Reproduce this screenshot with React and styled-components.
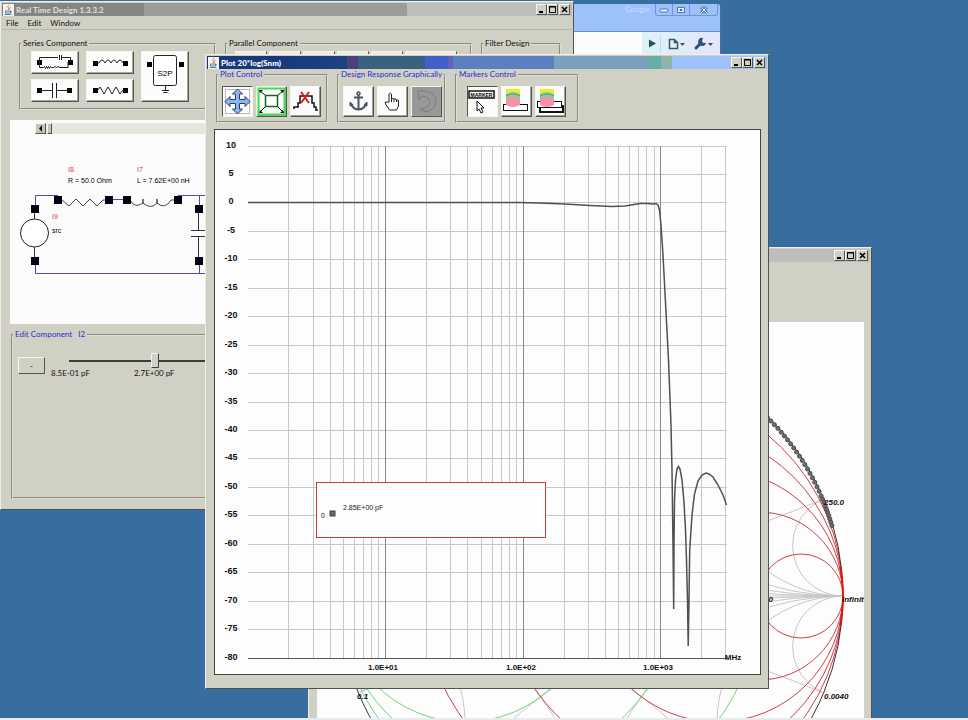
//App.jsx
import React, {useState} from 'react';
import styled, {createGlobalStyle, css} from 'styled-components';

const GlobalStyle = createGlobalStyle`
    * {
        box-sizing: border-box;
    }
    body {
        margin: 0;
        background-color: #386e9f;
        font-family: Lato, "DejaVu Sans Condensed", sans-serif;
        font-size: 8px;
        line-height: 10px;
        color: #111;
    }
    button, input {
        font: inherit;
        color: inherit;
    }
    svg {
        display: block;
    }
`;
//style for the whole desktop behind the windows
const Desktop = styled.main`
    position: relative;
    height: 100vh;
    overflow: hidden;
    background-color: #386e9f;
`;
//thin top edge of the hidden task bar
const TaskBar = styled.footer`
    position: absolute;
    left: 0;
    right: 0;
    bottom: 0;
    height: 2px;
    background-color: #e6ecec;
`;
//style for a classic window, placed on the desktop
const Frame = styled.section`
    position: absolute;
    left: ${(props) => props.$x}px;
    top: ${(props) => props.$y}px;
    width: ${(props) => props.$width}px;
    padding: 1px;
    display: flex;
    flex-direction: column;
    background-color: #d0d0c5;
    border: 1px solid #eeeee6;
    border-right-color: #4c5358;
    border-bottom-color: #4c5358;
`;
const TitleBar = styled.header`
    display: flex;
    align-items: center;
    justify-content: flex-end;
    gap: 2px;
    height: 13px;
    padding: 0 2px 0 1px;
    color: ${(props) => (props.$active ? '#fff' : '#dcdcd8')};
    background: ${(props) => props.$fill};
`;
const Title = styled.h1`
    flex: 1;
    margin: 0;
    font-size: 8px;
    line-height: 12px;
    font-weight: 900;
    white-space: nowrap;
`;
const raised = css`
    border: 1px solid #f6f6f0;
    border-right-color: #55554f;
    border-bottom-color: #55554f;
`;
const CaptionButton = styled.button`
    ${raised}
    width: 11px;
    height: 11px;
    padding: 0;
    display: grid;
    place-items: center;
    background-color: #d0d0c5;
    &:last-child {
        margin-left: 1px;
    }
`;
const CaptionButtons = styled.div`
    display: flex;
`;
const MenuBar = styled.nav`
    display: flex;
    gap: 9px;
    height: 14px;
    padding: 0 4px;
    align-items: center;
    border-bottom: 1px solid #b4b4aa;
`;
const MenuItem = styled.button`
    padding: 0;
    border: 0;
    background: none;
`;
//etched box with a caption
const Group = styled.fieldset`
    min-width: 0;
    margin: 0;
    padding: 0;
    border: 2px groove #dfdfd6;
    flex: ${(props) => (props.$width ? `0 0 ${props.$width}px` : '0 0 auto')};
`;
const Caption = styled.legend`
    padding: 0 2px;
    font-size: 8px;
    line-height: 9px;
    white-space: pre;
    color: ${(props) => (props.$blue ? '#2d2dd2' : '#111')};
`;
const GroupRow = styled.div`
    display: flex;
    align-items: stretch;
    gap: ${(props) => props.$gap}px;
    padding: ${(props) => props.$pad};
`;
const PartGrid = styled.div`
    display: grid;
    grid-template-columns: repeat(3, 48px);
    grid-template-rows: 23px 23px;
    gap: 5px 7px;
    padding: 3px 10px 6px;
`;
const PartButton = styled.button`
    ${raised}
    padding: 0;
    background-color: #fcfcfa;
    box-shadow: inset -1px -1px #a8a8a0;
    grid-row: ${(props) => (props.$tall ? '1 / span 2' : 'auto')};
    grid-column: ${(props) => (props.$tall ? 3 : 'auto')};
`;
const StubRow = styled.div`
    display: flex;
    gap: 2px;
    padding: 3px 8px 6px;
`;
const StubButton = styled.button`
    ${raised}
    width: ${(props) => props.$width || 32}px;
    height: 23px;
    padding: 0;
    background-color: #ecece4;
`;
const Schematic = styled.div`
    margin: 10px 7px 0 8px;
    background-color: #fcfcfc;
    padding-top: 3px;
`;
const ScrollTrack = styled.div`
    display: flex;
    gap: 1px;
    height: 11px;
    margin-left: 25px;
    background-color: #e6e6df;
`;
const ScrollButton = styled.button`
    ${raised}
    width: ${(props) => (props.$thumb ? 5 : 11)}px;
    padding: 0;
    display: grid;
    place-items: center;
    background-color: #c4c4bb;
`;
const EditRow = styled.div`
    display: flex;
    align-items: flex-start;
    gap: 6px;
    height: 158px;
    padding: 14px 5px 0;
`;
const StepButton = styled.button`
    ${raised}
    width: 27px;
    height: 17px;
    margin-top: 4px;
    padding: 0;
    background-color: #d0d0c5;
`;
const SliderBox = styled.div`
    display: flex;
    flex-direction: column;
`;
const Slider = styled.input`
    appearance: none;
    width: 172px;
    height: 15px;
    margin: 0 0 0 18px;
    background: linear-gradient(#3c3c38, #3c3c38) center / 100% 2px no-repeat;
    &::-webkit-slider-thumb {
        appearance: none;
        width: 8px;
        height: 15px;
        background-color: #d0d0c5;
        border: 1px solid #f6f6f0;
        border-right-color: #44443f;
        border-bottom-color: #44443f;
    }
`;
const SliderLabels = styled.div`
    display: flex;
    gap: 44px;
`;
const ToolRow = styled.div`
    display: flex;
    gap: 3px;
    padding: 7px ${(props) => props.$inset || 4}px 4px;
`;
const ToolButton = styled.button`
    width: 31px;
    height: 31px;
    padding: 0;
    border: 1px solid;
    border-color: ${(props) => (props.$pressed ? '#55554f #f6f6f0 #f6f6f0 #55554f' : '#f6f6f0 #55554f #55554f #f6f6f0')};
    box-shadow: ${(props) => (props.$pressed ? 'none' : 'inset -1px -1px #a0a098')};
    background-color: ${(props) => (props.disabled ? '#989898' : '#fcfcfc')};
`;
const PlotArea = styled.div`
    margin: 6px 6px 12px 7px;
    border: 1px solid #44443f;
    background-color: #fdfdfd;
    svg {
        width: 100%;
        height: auto;
    }
`;
const SmithArea = styled.div`
    margin: 60px 6px 0 7px;
    background-color: #fdfdfd;
    svg {
        width: 100%;
        height: auto;
    }
`;
//style for the browser window in the back
const Browser = styled.section`
    position: absolute;
    left: 420px;
    top: 4px;
    width: 301px;
    border-right: 1px solid #4d6f96;
    border-radius: 0 3px 0 0;
    background-color: #9dc1fb;
`;
const BrowserTop = styled.header`
    display: flex;
    justify-content: flex-end;
    height: 28px;
    padding-right: 2px;
    color: #c9dcfa;
    gap: 5px;
    border-bottom: 1px solid #7391b8;
`;
const BrowserButtons = styled.div`
    display: flex;
    height: 12px;
    border: 1px solid #6f94cf;
    border-top: 0;
    border-radius: 0 0 3px 3px;
`;
const BrowserButton = styled.button`
    width: ${(props) => props.$width}px;
    padding: 0;
    display: grid;
    place-items: center;
    border: 0;
    background: none;
    & + & {
        border-left: 1px solid #6f94cf;
    }
`;
const BrowserTools = styled.div`
    display: flex;
    justify-content: flex-end;
    height: 60px;
    background: linear-gradient(90deg, #fbfcfd 74%, #def3f5 74%, #e2e6fa);
`;
const BrowserTool = styled.button`
    width: ${(props) => props.$width}px;
    height: 23px;
    padding: 0;
    border: 0;
    background: none;
`;

const inactiveFill = 'linear-gradient(90deg, #858583 25%, #9c9c99 25% 71%, #bdbdbb 71%)';
const activeFill = `linear-gradient(90deg, #17397c 0 12%, #1d427f 25%, #4a427c 25% 27%,
    #3b6180 27% 39%, #4160c8 39% 43%, #6362bf 43% 44%, #5b80c1 44% 62%,
    #7aa0bd 62% 79%, #60b2a8 79% 81%, #8fb5aa 81% 83%, #9fc1fb 83%)`;

const JavaIcon = () => (
    <svg width="11" height="12" viewBox="0 0 11 12">
        <rect width="11" height="12" fill="#f2f4f4" />
        <path d="M6 1C3 3 7 4 5 6M7.500 3C5.500 4.500 7 5 6 6" stroke="#e07a30" fill="none" />
        <path d="M2.500 7h5v2h-5zM7.500 7q2 0 0 2M1.500 10.500h7" stroke="#537ca6" fill="none" />
    </svg>
);

function Caps(){
    return (
        <CaptionButtons>
            <CaptionButton aria-label="Minimize">
                <svg width="9" height="9"><path d="M2 7h4" stroke="#000" strokeWidth="2" /></svg>
            </CaptionButton>
            <CaptionButton aria-label="Maximize">
                <svg width="9" height="9"><path d="M1.500 1.500h6v6h-6zM1 2h7" stroke="#000" fill="none" /></svg>
            </CaptionButton>
            <CaptionButton aria-label="Close">
                <svg width="9" height="9"><path d="M2 2l5 5M7 2l-5 5" stroke="#000" strokeWidth="1.500" /></svg>
            </CaptionButton>
        </CaptionButtons>
    );
}

//the two square pins of a series part
const Pins = ({y, left = 8, right = 38}) => (
    <g>
        <rect x={left - 2} y={y - 2} width="5" height="5" />
        <rect x={right - 2} y={y - 2} width="5" height="5" />
    </g>
);
const partIcons = {
    tank: (
        <svg width="46" height="21">
            <Pins y={10} left={7} right={38} />
            <path d="M7.500 10V5.500H26M30 5.500h8.500V10M27.500 3v5M29.500 3v5M7.500 10v5.500h4l1-1 1 2 1-2 1 2 1-2 1 2 1-2 1 1h2q1.500-2 3 0 1.500-2 3 0h8.500V10" stroke="#222" fill="none" />
        </svg>
    ),
    coil: (
        <svg width="46" height="21">
            <Pins y={11} />
            <path d="M8 11h4q3-6 6 0 3-6 6 0 3-6 6 0 3-6 6 0" stroke="#222" fill="none" />
        </svg>
    ),
    cap: (
        <svg width="46" height="21">
            <Pins y={10} left={7} right={37} />
            <path d="M7 10.500h13M24 10.500h13M20.500 3v15M24.500 3v15" stroke="#222" fill="none" />
        </svg>
    ),
    resistor: (
        <svg width="46" height="21">
            <Pins y={10} />
            <path d="M8 10h3l2-3 4 7 4-7 4 7 4-7 4 7 3-4" stroke="#222" fill="none" />
        </svg>
    ),
};

function MainWindow(){
    const [value, setValue] = useState(50);
    return (
        <Frame $x={0} $y={1} $width={574}>
            <TitleBar $fill={inactiveFill}>
                <JavaIcon />
                <Title>Real Time Design 1.3.3.2</Title>
                <Caps />
            </TitleBar>
            <MenuBar>
                <MenuItem>File</MenuItem>
                <MenuItem>Edit</MenuItem>
                <MenuItem>Window</MenuItem>
            </MenuBar>
            <GroupRow $gap={9} $pad="9px 8px 0 17px">
                <Group $width={197}>
                    <Caption>Series Component</Caption>
                    <PartGrid>
                        <PartButton aria-label="Tank">{partIcons.tank}</PartButton>
                        <PartButton aria-label="Inductor">{partIcons.coil}</PartButton>
                        <PartButton $tall aria-label="S2P block">
                            <svg width="46" height="49">
                                <Pins y={12} left={7} right={39} />
                                <rect x="11.500" y="3.500" width="23" height="30" rx="2" fill="#fff" stroke="#222" />
                                <path d="M23.500 34v4M20 38.500h7M21.500 40.500h4" stroke="#222" />
                                <text x="23" y="24" textAnchor="middle" fontSize="8" fontFamily="Liberation Sans, sans-serif">S2P</text>
                            </svg>
                        </PartButton>
                        <PartButton aria-label="Capacitor">{partIcons.cap}</PartButton>
                        <PartButton aria-label="Resistor">{partIcons.resistor}</PartButton>
                    </PartGrid>
                </Group>
                <Group $width={247}>
                    <Caption>Parallel Component</Caption>
                    <StubRow>
                        <StubButton aria-label="Parallel tank" />
                        <StubButton aria-label="Parallel inductor" />
                        <StubButton aria-label="Parallel capacitor" />
                        <StubButton aria-label="Parallel resistor" />
                        <StubButton aria-label="Parallel line" />
                        <StubButton $width={52} aria-label="Parallel stub" />
                    </StubRow>
                </Group>
                <Group $width={80}>
                    <Caption>Filter Design</Caption>
                </Group>
            </GroupRow>
            <Schematic>
                <ScrollTrack>
                    <ScrollButton aria-label="Scroll left">
                        <svg width="5" height="7"><path d="M4 0v7L1 3.500z" fill="#111" /></svg>
                    </ScrollButton>
                    <ScrollButton $thumb aria-label="Scroll thumb" />
                </ScrollTrack>
                <svg width="220" height="190" viewBox="10 134 220 190" fontFamily="Liberation Sans, sans-serif" fontSize="7">
                    <path d="M35.500 209V195.500H58M109 199.500h18M178 195.500h50M35.500 261v12.500H228M199.500 195v14M199.500 261v12" stroke="#4a4abf" fill="none" />
                    <path d="M62 200l7 6 7-7 7 7 7-7 7 7 6-6h6M130 200q5 9 13 3v-4 4q8 7 14 0v-4 4q8 7 14-3h7" stroke="#444" fill="none" />
                    <path d="M34.500 209v10M34.500 247v14M198.500 209v21M198.500 237v24M191 230.500h16M191 236.500h16" stroke="#333" fill="none" />
                    <circle cx="34.500" cy="233" r="14" stroke="#222" fill="#fff" />
                    {[[58, 200], [109, 200], [127, 200], [178, 200], [35, 209], [35, 261], [199, 209], [199, 261]].map(([x, y]) => (
                        <rect key={`${x}-${y}`} x={x - 4} y={y - 4} width="8" height="8" fill="#000010" />
                    ))}
                    <g fill="#d83a3a">
                        <text x="68" y="172">I8</text>
                        <text x="137" y="172">I7</text>
                        <text x="52" y="219">I9</text>
                    </g>
                    <text x="68" y="183">R = 50.0 Ohm</text>
                    <text x="137" y="183">L = 7.62E+00 nH</text>
                    <text x="52" y="233">src</text>
                </svg>
            </Schematic>
            <GroupRow $gap={0} $pad="6px 8px 9px 9px">
                <Group $width={540}>
                    <Caption $blue>{'Edit Component   I2'}</Caption>
                    <EditRow>
                        <StepButton aria-label="Decrease">-</StepButton>
                        <SliderBox>
                            <Slider
                                id="tune"
                                type="range"
                                value={value}
                                onChange={(e) => setValue(Number(e.target.value))}/>
                            <SliderLabels>
                                <label htmlFor="tune">8.5E-01 pF</label>
                                <label htmlFor="tune">2.7E+00 pF</label>
                            </SliderLabels>
                        </SliderBox>
                    </EditRow>
                </Group>
            </GroupRow>
        </Frame>
    );
}

function BrowserWindow(){
    return (
        <Browser>
            <BrowserTop>
                <span>Google</span>
                <BrowserButtons>
                    <BrowserButton $width={16} aria-label="Minimize">
                        <svg width="10" height="8"><rect x="1" y="3" width="8" height="3" rx="1" fill="#e8f1ff" stroke="#5575a8" /></svg>
                    </BrowserButton>
                    <BrowserButton $width={17} aria-label="Restore">
                        <svg width="10" height="8"><path d="M1.500 1.500h7v5h-7zM4 3.500h2v1H4z" fill="#e8f1ff" stroke="#5575a8" /></svg>
                    </BrowserButton>
                    <BrowserButton $width={28} aria-label="Close">
                        <svg width="10" height="8">
                            <path d="M2 1l6 6M8 1l-6 6" stroke="#5575a8" strokeWidth="3" />
                            <path d="M2 1l6 6M8 1l-6 6" stroke="#e8f1ff" />
                        </svg>
                    </BrowserButton>
                </BrowserButtons>
            </BrowserTop>
            <BrowserTools>
                <BrowserTool $width={20} aria-label="Go">
                    <svg width="20" height="23"><path d="M7 7.500v8l7-4z" fill="#1f5960" /><path d="M18.500 3v17" stroke="#c8d4ee" /></svg>
                </BrowserTool>
                <BrowserTool $width={26} aria-label="Page menu">
                    <svg width="26" height="23">
                        <path d="M7.500 7.500h5l3 3v6h-8zM12.500 7.500v3h3" stroke="#35566e" fill="none" strokeWidth="1.500" />
                        <path d="M18 11h5l-2.500 3z" fill="#35566e" />
                    </svg>
                </BrowserTool>
                <BrowserTool $width={32} aria-label="Tools menu">
                    <svg width="32" height="23">
                        <path d="M8 16l5-5" stroke="#2f4f78" strokeWidth="3" strokeLinecap="round" />
                        <path d="M15 6a4 4 0 1 0 3 5l-3 0-1-2z" fill="#2f4f78" />
                        <path d="M20 11h5l-2.500 3z" fill="#2f4f78" />
                    </svg>
                </BrowserTool>
            </BrowserTools>
        </Browser>
    );
}

//chart geometry: outer circle of the Smith chart
const CX = 591;
const CY = 596;
const R = 252;
const steps = [0.2, 0.5, 1, 2, 5];

function SmithWindow(){
    const traces = [];
    for (let a = 46.500; a > 16; a -= a > 24 ? 1.150 : 0.800) {
        const rad = (a * Math.PI) / 180;
        traces.push([CX + (R - 1) * Math.cos(rad), CY - (R - 1) * Math.sin(rad)]);
    }
    return (
        <Frame $x={308} $y={247} $width={564}>
            <TitleBar $fill="#bdbdbb">
                <Caps />
            </TitleBar>
            <SmithArea>
                <svg viewBox="317 322 547 547" fill="none" fontFamily="Liberation Sans, sans-serif" fontSize="8">
                    <clipPath id="unit"><circle cx={CX} cy={CY} r={R} /></clipPath>
                    <g clipPath="url(#unit)">
                        <g stroke="#c6c6c6">
                            {steps.map((s) => (
                                <g key={s}>
                                    <circle cx={CX + R} cy={CY - R / s} r={R / s} />
                                    <circle cx={CX + R} cy={CY + R / s} r={R / s} />
                                    <circle cx={CX - R} cy={CY - R / s} r={R / s} />
                                    <circle cx={CX - R} cy={CY + R / s} r={R / s} />
                                </g>
                            ))}
                            <path d={`M${CX - R} ${CY}h${2 * R}`} />
                        </g>
                        {steps.map((s) => (
                            <circle key={s} cx={CX - R + R / (1 + s)} cy={CY} r={R / (1 + s)} stroke="#6fd67a" />
                        ))}
                        {steps.map((s) => (
                            <circle key={s} cx={CX + R - R / (1 + s)} cy={CY} r={R / (1 + s)} stroke="#cf4046" />
                        ))}
                    </g>
                    <circle cx={CX} cy={CY} r={R} stroke="#333" />
                    <path d="M840 566q3 14 3 30 0 16-3 30" stroke="#e01515" strokeWidth="2" />
                    {traces.map(([x, y]) => (
                        <circle key={y} cx={x} cy={y} r="2" fill="#707070" stroke="#4a4a4a" />
                    ))}
                    <g fill="#111" fontWeight="bold" fontStyle="italic">
                        <text x="824" y="505">250.0</text>
                        <text x="842" y="602">Infinit</text>
                        <text x="824" y="699">0.0040</text>
                        <text x="773" y="602" textAnchor="end">250.0</text>
                        <text x="357" y="699">0.1</text>
                    </g>
                </svg>
            </SmithArea>
        </Frame>
    );
}

const DECADE = 137.600;
//vertical grid lines, 2..9 of each decade up to 3 GHz
const minorLines = [];
for (let d = 0; d < 4; d++) {
    for (let n = 2; n < 10; n++) {
        const x = 248 + (d + Math.log10(n)) * DECADE;
        if (x < 728) minorLines.push(Math.round(x) - 0.500);
    }
}
const levels = Array.from({length: 19}, (_, i) => 10 - i * 5);
const levelY = (level) => Math.round(145.500 + ((10 - level) * 512) / 90);
const response = 'M248 202.500H518L540 203 565 204 590 205.500 612 206.500 625 206 640 203.500 648 203.500 653 204 656 203.500 658 205 659.500 210 661 225 663 255 666 312 668.500 360 671 425 672 470 673 545 673.700 609 674 545 674.500 500 675.500 480 677 469 678.500 466.500 680 469 682 480 684 502 685.500 530 686.500 560 687.500 600 688.200 646 689 600 689.700 550 692 515 694.500 494 698 481 702 475 706 473 709 474 713 477 718 485 723 495 726.500 505';

function PlotChart(){
    return (
        <svg viewBox="215 130 545 544" fill="none" fontFamily="Liberation Sans, sans-serif" fontSize="8">
            <g stroke="#c8c8c8">
                {minorLines.map((x) => <path key={x} d={`M${x} 146V658`} />)}
                {levels.map((level) => <path key={level} d={`M248 ${levelY(level) + 0.500}H727`} />)}
            </g>
            <path d="M385.500 146v512M523.500 146v512M660.500 146v512" stroke="#8a8a8a" />
            <path d="M248 658.500H727" stroke="#555" />
            <path d={response} stroke="#505050" strokeWidth="1.500" />
            <g fill="#111" fontWeight="bold" textAnchor="middle">
                {levels.map((level) => (
                    <text key={level} x="231" y={levelY(level) + 2} fontSize="9">{level}</text>
                ))}
                <text x="383" y="670">1.0E+01</text>
                <text x="521" y="670">1.0E+02</text>
                <text x="658" y="670">1.0E+03</text>
                <text x="733" y="660">MHz</text>
            </g>
            <rect x="316.500" y="482.500" width="229" height="55" fill="#fdfdfd" stroke="#cc3b44" />
            <rect x="330" y="511" width="5" height="5" fill="#666" stroke="#444" />
            <g fill="#222" fontSize="7">
                <text x="321" y="518">0</text>
                <text x="343" y="510">2.85E+00 pF</text>
            </g>
        </svg>
    );
}

//eraser drawing shared by the two clear buttons
const Eraser = () => (
    <g>
        <path d="M4 2h14v5H4z" fill="#ecf01c" />
        <path d="M4 7q7-4 14 0v6H4z" fill="#8fc9a0" />
        <path d="M4 9q7-4 14 0" stroke="#4b9a88" fill="none" />
        <path d="M4 12q7-4 14 0v6q-7 4-14 0z" fill="#f592a5" />
    </g>
);

const toolIcons = {
    move: (
        <svg width="29" height="29">
            <rect x="2.500" y="2.500" width="24" height="24" fill="#fff" stroke="#b8b8b8" />
            <path d="M14.500 2l5 5h-3v5.500H22v-3l5 5-5 5v-3h-5.500V22h3l-5 5-5-5h3v-5.500H7v3l-5-5 5-5v3h5.500V7h-3z" fill="#8db4ee" stroke="#24406f" />
        </svg>
    ),
    fit: (
        <svg width="29" height="29">
            <rect x="1.500" y="1.500" width="26" height="26" fill="#fff" stroke="#3ce049" strokeWidth="2" />
            <rect x="8.500" y="8.500" width="12" height="11" fill="none" stroke="#116622" strokeWidth="1.500" />
            <path d="M8 8L3 4M21 8l5-4M8 20l-5 5M21 20l5 5" stroke="#111" />
            <path d="M2 3h4l-3 3zM27 3h-4l3 3zM2 26h4l-3-3zM27 26h-4l3-3z" fill="#111" />
        </svg>
    ),
    remove: (
        <svg width="29" height="29">
            <path d="M3 22v-2h4V16h2V9h12v7h2v4h2v3h2" stroke="#111" strokeWidth="1.500" fill="none" />
            <path d="M10 5l8 11M18 5l-8 11" stroke="#dc1c1c" strokeWidth="2" />
        </svg>
    ),
    anchor: (
        <svg width="29" height="29" fill="none" stroke="#455566">
            <circle cx="14.500" cy="6.500" r="1.500" strokeWidth="1.500" />
            <path d="M14.500 8v14M10 10.500h9" strokeWidth="2" />
            <path d="M7 16q1 6 7.500 6.500Q21 22 22 16" strokeWidth="2" />
            <path d="M6 19v-4l3 3zM23 19v-4l-3 3z" fill="#455566" />
        </svg>
    ),
    hand: (
        <svg width="29" height="29">
            <path d="M11 15V7q1.500-2 2.500 0v5q2-1 2.500 0 2-1 2.500 1 2-.500 2 1v5l-2 4h-7l-4-6q-1-3 1-2z" stroke="#222" fill="#fff" />
            <path d="M13.500 12v3M16 12v3M18.500 13v2" stroke="#222" />
        </svg>
    ),
    undo: (
        <svg width="29" height="29" stroke="#7c7c7c" fill="none">
            <path d="M6 4h6q12 1 12 11-1 8-11 10l-5-3q8 0 10-6 0-7-8-7l-3 4z" />
        </svg>
    ),
    marker: (
        <svg width="29" height="29">
            <rect x="1" y="4" width="25" height="7" fill="#fff" stroke="#111" strokeWidth="1.500" />
            <text x="13.500" y="10" textAnchor="middle" fontSize="5" fontWeight="bold" fontFamily="Liberation Sans, sans-serif">MARKER</text>
            <path d="M9 14v10l2-2 2 4 2-1-2-4h3z" fill="#fff" stroke="#111" />
        </svg>
    ),
    clearOne: (
        <svg width="29" height="29">
            <rect x="1.500" y="17.500" width="24" height="6" fill="#fff" stroke="#111" />
            <Eraser />
        </svg>
    ),
    clearAll: (
        <svg width="29" height="29">
            <rect x="4" y="19" width="23" height="6" fill="#fff" stroke="#111" strokeWidth="2" />
            <rect x="1.500" y="14.500" width="24" height="6" fill="#fff" stroke="#111" />
            <Eraser />
        </svg>
    ),
};

const Tool = ({name, ...rest}) => (
    <ToolButton aria-label={name} {...rest}>{toolIcons[name]}</ToolButton>
);

function PlotWindow(){
    return (
        <Frame $x={205} $y={54} $width={564}>
            <TitleBar $active $fill={activeFill}>
                <JavaIcon />
                <Title>Plot 20*log(Snm)</Title>
                <Caps />
            </TitleBar>
            <GroupRow $gap={9} $pad="1px 0 0 9px">
                <Group $width={112}>
                    <Caption $blue>Plot Control</Caption>
                    <ToolRow>
                        <Tool name="move" $pressed />
                        <Tool name="fit" />
                        <Tool name="remove" />
                    </ToolRow>
                </Group>
                <Group $width={109}>
                    <Caption $blue>Design Response Graphically</Caption>
                    <ToolRow>
                        <Tool name="anchor" />
                        <Tool name="hand" />
                        <Tool name="undo" disabled />
                    </ToolRow>
                </Group>
                <Group $width={124}>
                    <Caption $blue>Markers Control</Caption>
                    <ToolRow $inset={10}>
                        <Tool name="marker" $pressed />
                        <Tool name="clearOne" />
                        <Tool name="clearAll" />
                    </ToolRow>
                </Group>
            </GroupRow>
            <PlotArea>
                <PlotChart />
            </PlotArea>
        </Frame>
    );
}

export default function App(){
    return (
        <Desktop>
            <GlobalStyle />
            <BrowserWindow />
            <SmithWindow />
            <MainWindow />
            <PlotWindow />
            <TaskBar />
        </Desktop>
    );
}
